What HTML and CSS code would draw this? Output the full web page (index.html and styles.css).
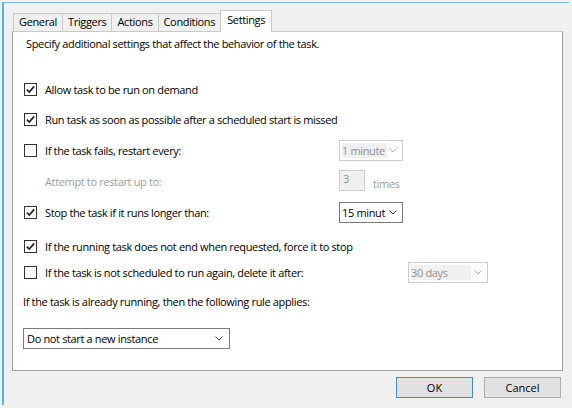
FILE: index.html
```html
<!DOCTYPE html>
<html lang="en">

<head>
    <meta charset="UTF-8">
    <title>Task Properties - Settings</title>
    <link rel="stylesheet" href="styles.css">
</head>

<body>
    <div class="dialog">
        <div class="tabs">
            <div class="tab">General</div>
            <div class="tab">Triggers</div>
            <div class="tab">Actions</div>
            <div class="tab">Conditions</div>
            <div class="tab active">Settings</div>
        </div>

        <div class="panel">
            <p class="intro">Specify additional settings that affect the behavior of the task.</p>

            <div class="row r1">
                <label class="opt"><span class="check"><svg width="11" height="11" viewBox="0 0 11 11"><path d="M1.8 5.6 L4.3 8.1 L9.2 2.4" /></svg></span>Allow task to be run on demand</label>
            </div>
            <div class="row r2">
                <label class="opt"><span class="check"><svg width="11" height="11" viewBox="0 0 11 11"><path d="M1.8 5.6 L4.3 8.1 L9.2 2.4" /></svg></span>Run task as soon as possible after a scheduled start is missed</label>
            </div>
            <div class="row r3">
                <label class="opt"><span class="check"></span>If the task fails, restart every:</label>
                <div class="combo off w64">
                    <span class="combo-text">1 minute</span>
                    <svg width="8" height="5" viewBox="0 0 8 5"><path d="M0.5 0.5 L4 4 L7.5 0.5" /></svg>
                </div>
            </div>
            <div class="row r4">
                <span class="sub muted">Attempt to restart up to:</span>
                <div class="count">
                    <span class="textbox">3</span>
                    <span class="muted times">times</span>
                </div>
            </div>
            <div class="row r5">
                <label class="opt"><span class="check"><svg width="11" height="11" viewBox="0 0 11 11"><path d="M1.8 5.6 L4.3 8.1 L9.2 2.4" /></svg></span>Stop the task if it runs longer than:</label>
                <div class="combo w64">
                    <span class="combo-text">15 minut</span>
                    <svg width="8" height="5" viewBox="0 0 8 5"><path d="M0.5 0.5 L4 4 L7.5 0.5" /></svg>
                </div>
            </div>
            <div class="row r6">
                <label class="opt"><span class="check"><svg width="11" height="11" viewBox="0 0 11 11"><path d="M1.8 5.6 L4.3 8.1 L9.2 2.4" /></svg></span>If the running task does not end when requested, force it to stop</label>
            </div>
            <div class="row r7 wide">
                <label class="opt"><span class="check"></span>If the task is not scheduled to run again, delete it after:</label>
                <div class="combo off w80">
                    <span class="combo-text grow">30 days</span>
                    <svg width="8" height="5" viewBox="0 0 8 5"><path d="M0.5 0.5 L4 4 L7.5 0.5" /></svg>
                </div>
            </div>

            <p class="rule">If the task is already running, then the following rule applies:</p>
            <div class="combo w207 instance">
                <span class="combo-text">Do not start a new instance</span>
                <svg width="8" height="5" viewBox="0 0 8 5"><path d="M0.5 0.5 L4 4 L7.5 0.5" /></svg>
            </div>
        </div>

        <div class="buttons">
            <button class="btn default">OK</button>
            <button class="btn">Cancel</button>
        </div>
    </div>
</body>

</html>
```

FILE: styles.css
```css
body {
    margin: 0;
    background: #f0f0f0;
    font-family: "Open Sans", "Noto Sans", sans-serif;
    font-size: 11px;
    letter-spacing: -0.35px;
    color: #000;
}
.dialog {
    width: 567px;
    height: 403px;
    box-sizing: border-box;
    margin-top: 2px;
    margin-left: 2px;
    border-top: 1px solid #86b8d8;
    border-left: 2px solid #4cb9e9;
}

/* tab strip */
.tabs {
    display: flex;
    align-items: flex-end;
    height: 22px;
    margin: 7px 0 -1px 9px;
}
.tab {
    position: relative;
    height: 18px;
    box-sizing: border-box;
    margin-bottom: 1px;
    margin-right: -1px;
    padding: 0 5px;
    line-height: 16px;
    border: 1px solid #c9c9c9;
    border-bottom: none;
    background: #f0f0f0;
}
.tab.active {
    z-index: 1;
    height: 22px;
    margin-bottom: 0;
    padding: 0 6px;
    line-height: 17px;
    background: #fff;
}

/* page body */
.panel {
    width: 551px;
    height: 340px;
    box-sizing: border-box;
    margin-left: 8px;
    padding: 4px 0 0 10px;
    background: #fff;
    border: 1px solid #a0a0a0;
    border-top-color: #c9c9c9;
}
.intro {
    margin: 0 0 0 3px;
    line-height: 16px;
}
.row {
    display: grid;
    grid-template-columns: 316px auto;
    align-items: center;
    height: 22px;
}
.row.wide {
    grid-template-columns: 385px auto;
}
.r1 { margin-top: 26px; }
.r2 { margin-top: 8px; }
.r3 { margin-top: 9px; }
.r4 { margin-top: 9px; height: 21px; }
.r5 { margin-top: 10px; }
.r6 { margin-top: 12px; }
.r7 { margin-top: 4px; }

.opt {
    display: flex;
    align-items: center;
    gap: 8px;
    white-space: nowrap;
}
.check {
    display: flex;
    align-items: center;
    justify-content: center;
    width: 13px;
    height: 13px;
    box-sizing: border-box;
    margin-left: 1px;
    border: 1px solid #333;
    background: #fff;
}
.check path {
    fill: none;
    stroke: #222;
    stroke-width: 1.7;
}
.sub {
    padding-left: 22px;
    padding-top: 2px;
}
.muted {
    color: #9d9d9d;
}

/* combo boxes and the retry count */
.combo {
    display: flex;
    align-items: center;
    justify-content: space-between;
    height: 21px;
    box-sizing: border-box;
    padding: 0 5px 0 2px;
    border: 1px solid #7a7a7a;
    background: #fff;
    white-space: nowrap;
}
.combo path {
    fill: none;
    stroke: #444;
}
.combo.off {
    border-color: #cdcdcd;
    color: #8f8f8f;
}
.combo.off .combo-text {
    background: #f0f0f0;
    padding-right: 2px;
}
.combo.off path {
    stroke: #b5b5b5;
}
.combo-text.grow {
    flex: 0 0 58px;
}
.w64 { width: 64px; }
.w80 { width: 80px; }
.w207 { width: 207px; }

.count {
    display: flex;
    align-items: flex-end;
    gap: 8px;
}
.textbox {
    width: 26px;
    height: 21px;
    box-sizing: border-box;
    padding: 1px 0 0 3px;
    line-height: 14px;
    border: 1px solid #cdcdcd;
    background: #f0f0f0;
    color: #8f8f8f;
}
.times {
    line-height: 14px;
}

.rule {
    margin: 11px 0 0;
    line-height: 16px;
}
.instance {
    margin-top: 18px;
    padding-left: 3px;
    padding-right: 6px;
}

/* dialog buttons */
.buttons {
    display: flex;
    justify-content: flex-end;
    gap: 11px;
    width: 551px;
    margin: 6px 0 0 8px;
    padding-right: 2px;
    box-sizing: border-box;
}
.btn {
    width: 77px;
    height: 21px;
    padding: 0;
    font: inherit;
    color: #000;
    background: #e1e1e1;
    border: 1px solid #adadad;
}
.btn.default {
    border-color: #4a8ac4;
}
```
